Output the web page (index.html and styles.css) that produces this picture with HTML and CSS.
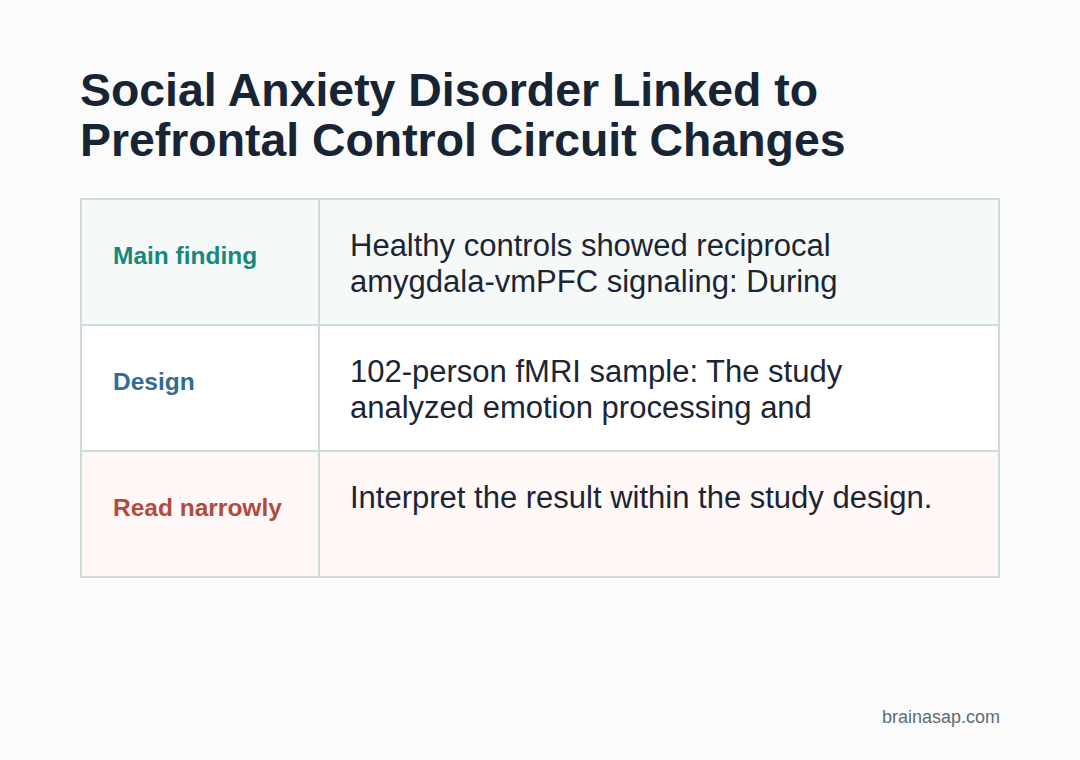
FILE: index.html
```html
<!DOCTYPE html>
<html lang="en">
<head>
    <meta charset="UTF-8">
    <title>Social Anxiety Disorder Linked to Prefrontal Control Circuit Changes</title>
    <link rel="stylesheet" href="styles.css">
</head>
<body>

<div class="page">
    <h1 class="title">Social Anxiety Disorder Linked to Prefrontal Control Circuit Changes</h1>

    <div class="summary">
        <div class="label-cell row-finding"><span class="label label-finding">Main finding</span></div>
        <div class="text-cell row-finding">
            <p class="text">Healthy controls showed reciprocal amygdala-vmPFC signaling: During</p>
        </div>

        <div class="label-cell row-design"><span class="label label-design">Design</span></div>
        <div class="text-cell row-design">
            <p class="text">102-person fMRI sample: The study analyzed emotion processing and</p>
        </div>

        <div class="label-cell row-caution"><span class="label label-caution">Read narrowly</span></div>
        <div class="text-cell row-caution">
            <p class="text">Interpret the result within the study design.</p>
        </div>
    </div>

    <div class="footer">brainasap.com</div>
</div>

</body>
</html>
```

FILE: styles.css
```css
/* Base */
body {
    margin: 0;
    padding: 0;
    background-color: #fbfbfb;
    font-family: 'Liberation Sans', Arial, sans-serif;
    color: #1b2535;
}

.page {
    box-sizing: border-box;
    height: 760px;
    padding: 65px 80px 32px;
    display: flex;
    flex-direction: column;
}

.title {
    margin: 0 0 33px;
    font-size: 46.4px;
    line-height: 50px;
    font-weight: bold;
    color: #172434;
    letter-spacing: 0;
}

/* Summary grid */
.summary {
    width: 920px;
    box-sizing: border-box;
    display: grid;
    grid-template-columns: 238px 1fr;
    grid-auto-rows: 126px;
    border-top: 2px solid #cddcd7;
    border-left: 2px solid #cddcd7;
}

.label-cell, .text-cell {
    border-right: 2px solid #cddcd7;
    border-bottom: 2px solid #cddcd7;
    overflow: hidden;
}

.label-cell {
    padding: 41px 20px 0 31px;
}

.text-cell {
    padding: 28px 24px 0 30px;
}

.row-finding { background-color: #f5f9f8; }
.row-design { background-color: #ffffff; }
.row-caution { background-color: #fff8f6; }

.label {
    display: block;
    font-size: 24.5px;
    line-height: 1.2;
    font-weight: bold;
}

.label-finding { color: #16897a; }
.label-design { color: #336b94; }
.label-caution { color: #b34a3e; }

.text {
    margin: 0;
    font-size: 31px;
    line-height: 1.15;
    max-height: 72px;
    overflow: hidden;
    color: #1b2535;
}

.footer {
    margin-top: auto;
    text-align: right;
    font-size: 18px;
    line-height: 1.15;
    color: #5d6b78;
}
```
